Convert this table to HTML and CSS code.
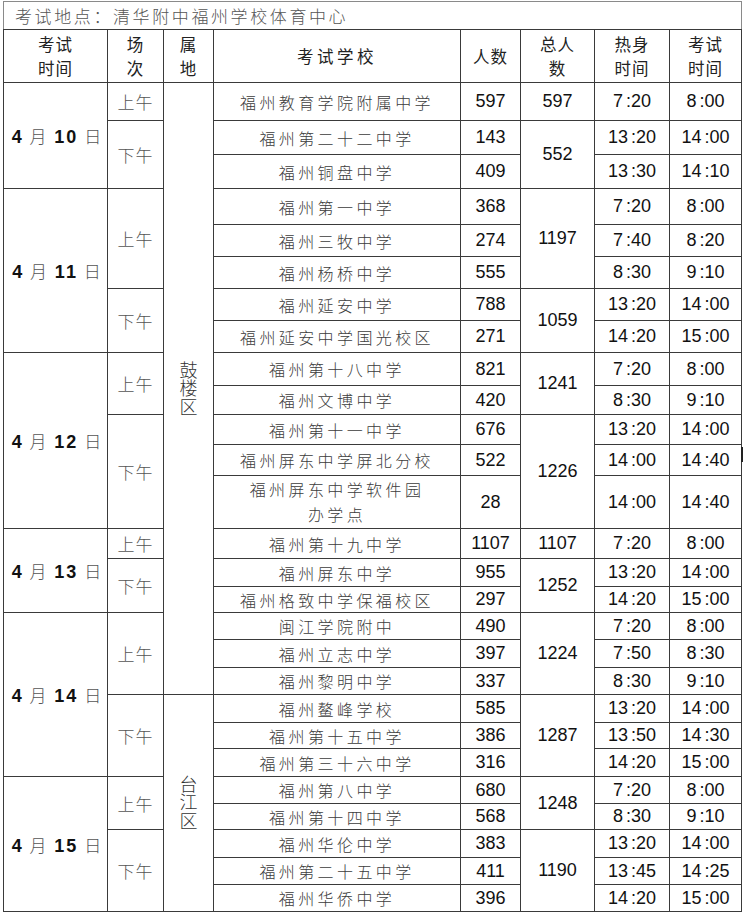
FILE: index.html
```html
<!DOCTYPE html>
<html lang="zh-CN">
<head>
<meta charset="utf-8">
<title>考试安排</title>
<link rel="stylesheet" href="styles.css">
</head>
<body>
<div class="page">
<table class="sched">
<colgroup>
<col class="c1"><col class="c2"><col class="c3"><col class="c4"><col class="c5"><col class="c6"><col class="c7"><col class="c8">
</colgroup>
<tr class="h28"><td colspan="8" class="title">考试地点：清华附中福州学校体育中心</td></tr>
<tr class="h53 head">
<td>考试<br>时间</td><td>场<br>次</td><td>属<br>地</td><td class="wide">考试学校</td><td>人数</td><td>总人<br>数</td><td>热身<br>时间</td><td>考试<br>时间</td>
</tr>
<tr class="h38"><td rowspan="3" class="date"><b>4</b> 月 <b>10</b> 日</td><td class="sess">上午</td><td rowspan="19" class="area">鼓楼区</td><td class="school">福州教育学院附属中学</td><td class="num">597</td><td class="num">597</td><td class="num t">7 :20</td><td class="num t">8 :00</td></tr>
<tr class="h34"><td rowspan="2" class="sess">下午</td><td class="school">福州第二十二中学</td><td class="num">143</td><td rowspan="2" class="num">552</td><td class="num t">13 :20</td><td class="num t">14 :00</td></tr>
<tr class="h34"><td class="school">福州铜盘中学</td><td class="num">409</td><td class="num t">13 :30</td><td class="num t">14 :10</td></tr>
<tr class="h36"><td rowspan="5" class="date"><b>4</b> 月 <b>11</b> 日</td><td rowspan="3" class="sess">上午</td><td class="school">福州第一中学</td><td class="num">368</td><td rowspan="3" class="num">1197</td><td class="num t">7 :20</td><td class="num t">8 :00</td></tr>
<tr class="h32"><td class="school">福州三牧中学</td><td class="num">274</td><td class="num t">7 :40</td><td class="num t">8 :20</td></tr>
<tr class="h32 soft"><td class="school">福州杨桥中学</td><td class="num">555</td><td class="num t">8 :30</td><td class="num t">9 :10</td></tr>
<tr class="h32"><td rowspan="2" class="sess">下午</td><td class="school">福州延安中学</td><td class="num">788</td><td rowspan="2" class="num">1059</td><td class="num t">13 :20</td><td class="num t">14 :00</td></tr>
<tr class="h32 soft"><td class="school">福州延安中学国光校区</td><td class="num">271</td><td class="num t">14 :20</td><td class="num t">15 :00</td></tr>
<tr class="h33"><td rowspan="5" class="date"><b>4</b> 月 <b>12</b> 日</td><td rowspan="2" class="sess">上午</td><td class="school">福州第十八中学</td><td class="num">821</td><td rowspan="2" class="num">1241</td><td class="num t">7 :20</td><td class="num t">8 :00</td></tr>
<tr class="h29"><td class="school">福州文博中学</td><td class="num">420</td><td class="num t">8 :30</td><td class="num t">9 :10</td></tr>
<tr class="h30"><td rowspan="3" class="sess">下午</td><td class="school">福州第十一中学</td><td class="num">676</td><td rowspan="3" class="num">1226</td><td class="num t">13 :20</td><td class="num t">14 :00</td></tr>
<tr class="h31"><td class="school">福州屏东中学屏北分校</td><td class="num">522</td><td class="num t">14 :00</td><td class="num t">14 :40</td></tr>
<tr class="h53"><td class="school two">福州屏东中学软件园<br>办学点</td><td class="num">28</td><td class="num t">14 :00</td><td class="num t">14 :40</td></tr>
<tr class="h30"><td rowspan="3" class="date"><b>4</b> 月 <b>13</b> 日</td><td class="sess">上午</td><td class="school">福州第十九中学</td><td class="num">1107</td><td class="num">1107</td><td class="num t">7 :20</td><td class="num t">8 :00</td></tr>
<tr class="h28"><td rowspan="2" class="sess">下午</td><td class="school">福州屏东中学</td><td class="num">955</td><td rowspan="2" class="num">1252</td><td class="num t">13 :20</td><td class="num t">14 :00</td></tr>
<tr class="h26"><td class="school">福州格致中学保福校区</td><td class="num">297</td><td class="num t">14 :20</td><td class="num t">15 :00</td></tr>
<tr class="h27"><td rowspan="6" class="date"><b>4</b> 月 <b>14</b> 日</td><td rowspan="3" class="sess">上午</td><td class="school">闽江学院附中</td><td class="num">490</td><td rowspan="3" class="num">1224</td><td class="num t">7 :20</td><td class="num t">8 :00</td></tr>
<tr class="h28"><td class="school">福州立志中学</td><td class="num">397</td><td class="num t">7 :50</td><td class="num t">8 :30</td></tr>
<tr class="h27"><td class="school">福州黎明中学</td><td class="num">337</td><td class="num t">8 :30</td><td class="num t">9 :10</td></tr>
<tr class="h28"><td rowspan="3" class="sess">下午</td><td rowspan="8" class="area">台江区</td><td class="school">福州鳌峰学校</td><td class="num">585</td><td rowspan="3" class="num">1287</td><td class="num t">13 :20</td><td class="num t">14 :00</td></tr>
<tr class="h26"><td class="school">福州第十五中学</td><td class="num">386</td><td class="num t">13 :50</td><td class="num t">14 :30</td></tr>
<tr class="h28"><td class="school">福州第三十六中学</td><td class="num">316</td><td class="num t">14 :20</td><td class="num t">15 :00</td></tr>
<tr class="h27"><td rowspan="5" class="date"><b>4</b> 月 <b>15</b> 日</td><td rowspan="2" class="sess">上午</td><td class="school">福州第八中学</td><td class="num">680</td><td rowspan="2" class="num">1248</td><td class="num t">7 :20</td><td class="num t">8 :00</td></tr>
<tr class="h26 soft"><td class="school">福州第十四中学</td><td class="num">568</td><td class="num t">8 :30</td><td class="num t">9 :10</td></tr>
<tr class="h28"><td rowspan="3" class="sess">下午</td><td class="school">福州华伦中学</td><td class="num">383</td><td rowspan="3" class="num">1190</td><td class="num t">13 :20</td><td class="num t">14 :00</td></tr>
<tr class="h27"><td class="school">福州第二十五中学</td><td class="num">411</td><td class="num t">13 :45</td><td class="num t">14 :25</td></tr>
<tr class="h27"><td class="school">福州华侨中学</td><td class="num">396</td><td class="num t">14 :20</td><td class="num t">15 :00</td></tr>
</table>
<span class="mark"></span>
</div>
</body>
</html>
```
FILE: styles.css
```css
html, body {
  margin: 0;
  padding: 0;
  background: #ffffff;
}

.page {
  position: relative;
  width: 744px;
  height: 914px;
  padding: 1px 0 0 3px;
  box-sizing: border-box;
  font-family: "Noto Sans CJK SC", "Liberation Sans", sans-serif;
}

.sched {
  border-collapse: collapse;
  table-layout: fixed;
  width: 738px;
}

.c1 { width: 104px; }
.c2 { width: 56px; }
.c3 { width: 50px; }
.c4 { width: 247px; }
.c5 { width: 60px; }
.c6 { width: 74px; }
.c7 { width: 75px; }
.c8 { width: 72px; }

.sched td {
  border: 1px solid #3a3a3a;
  padding: 0;
  text-align: center;
  vertical-align: middle;
  overflow: hidden;
  white-space: nowrap;
}

.h26 { height: 26px; }
.h27 { height: 27px; }
.h28 { height: 28px; }
.h29 { height: 29px; }
.h30 { height: 30px; }
.h31 { height: 31px; }
.h32 { height: 32px; }
.h33 { height: 33px; }
.h34 { height: 34px; }
.h36 { height: 36px; }
.h38 { height: 38px; }
.h53 { height: 53px; }

.sched td.title {
  text-align: left;
  padding-left: 11px;
  font-size: 17px;
  font-weight: 300;
  letter-spacing: 2.6px;
  color: #555555;
  border-color: #8a8a8a;
  border-bottom-color: #3a3a3a;
}

.head td {
  font-size: 16.5px;
  line-height: 24px;
  color: #222222;
  font-weight: 400;
  letter-spacing: 1px;
}

.head td.wide {
  letter-spacing: 3.5px;
}

.school {
  font-size: 16px;
  font-weight: 300;
  letter-spacing: 3.4px;
  color: #3c3c3c;
}

.school.two {
  white-space: normal;
  line-height: 25px;
}

.sess {
  font-size: 17px;
  font-weight: 300;
  letter-spacing: 1px;
  color: #555555;
}

.sched td.area {
  font-size: 18px;
  font-weight: 300;
  color: #333333;
  writing-mode: vertical-rl;
  text-orientation: upright;
  letter-spacing: 0.5px;
  line-height: 50px;
}

.sched td.date {
  font-size: 17px;
  font-weight: 300;
  color: #555555;
  letter-spacing: 2px;
  padding-left: 4px;
}

.date b {
  font-family: "Liberation Sans", Arial, sans-serif;
  font-size: 18px;
  font-weight: 700;
  color: #111111;
  letter-spacing: 2px;
}

.num {
  font-family: "Liberation Sans", Arial, sans-serif;
  font-size: 18px;
  color: #111111;
}

.t {
  word-spacing: -2px;
}

.soft td {
  border-top-color: #9a9a9a;
}

.mark {
  position: absolute;
  left: 741px;
  top: 447px;
  width: 2px;
  height: 15px;
  background: #222222;
}
```
